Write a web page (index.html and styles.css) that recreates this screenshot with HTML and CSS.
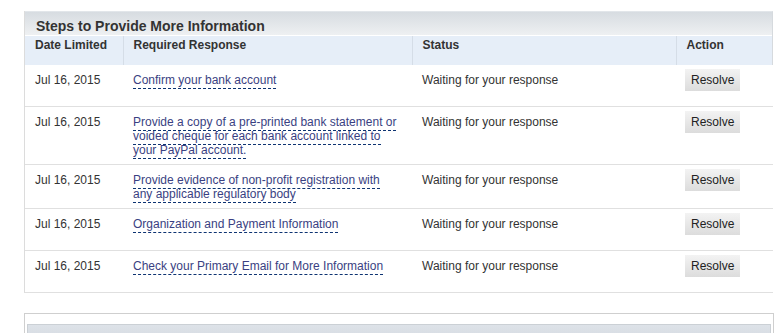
FILE: index.html
```html
<!DOCTYPE html>
<html lang="en">
<head>
    <meta charset="UTF-8">
    <meta name="viewport" content="width=device-width, initial-scale=1.0">
    <title>Steps to Provide More Information</title>
    <link rel="stylesheet" href="styles.css">
</head>
<body>
    <div class="panel">
        <div class="panel-title">Steps to Provide More Information</div>
        <table class="steps">
            <colgroup>
                <col class="col-date">
                <col class="col-response">
                <col class="col-status">
                <col>
            </colgroup>
            <thead>
                <tr>
                    <th>Date Limited</th>
                    <th>Required Response</th>
                    <th>Status</th>
                    <th class="last">Action</th>
                </tr>
            </thead>
            <tbody>
                <tr>
                    <td>Jul 16, 2015</td>
                    <td><a class="step-link" href="#">Confirm your bank account</a></td>
                    <td>Waiting for your response</td>
                    <td class="action"><button>Resolve</button></td>
                </tr>
                <tr>
                    <td>Jul 16, 2015</td>
                    <td><a class="step-link" href="#">Provide a copy of a pre-printed bank statement or voided cheque for each bank account linked to your PayPal account.</a></td>
                    <td>Waiting for your response</td>
                    <td class="action"><button>Resolve</button></td>
                </tr>
                <tr>
                    <td>Jul 16, 2015</td>
                    <td><a class="step-link" href="#">Provide evidence of non-profit registration with any applicable regulatory body</a></td>
                    <td>Waiting for your response</td>
                    <td class="action"><button>Resolve</button></td>
                </tr>
                <tr>
                    <td>Jul 16, 2015</td>
                    <td><a class="step-link" href="#">Organization and Payment Information</a></td>
                    <td>Waiting for your response</td>
                    <td class="action"><button>Resolve</button></td>
                </tr>
                <tr>
                    <td>Jul 16, 2015</td>
                    <td><a class="step-link" href="#">Check your Primary Email for More Information</a></td>
                    <td>Waiting for your response</td>
                    <td class="action"><button>Resolve</button></td>
                </tr>
            </tbody>
        </table>
    </div>

    <div class="panel-next">
        <div class="panel-next-bar"></div>
    </div>
</body>
</html>
```

FILE: styles.css
```css
body {
    margin: 0;
    font-family: Arial, "Liberation Sans", sans-serif;
    font-size: 12px;
    color: #333;
    background: #fff;
}
.panel {
    width: 749px;
    margin: 11px 0 0 24px;
    border-left: 1px solid #dcdcdc;
    border-bottom: 1px solid #e0e0e0;
    box-sizing: border-box;
}
.panel-title {
    height: 24px;
    padding: 6px 11px 0;
    box-sizing: border-box;
    border-top: 1px solid #e2e6ea;
    border-right: 1px solid #d6dade;
    background: linear-gradient(#d7dce1, #eef0f2);
    font-size: 14px;
    font-weight: bold;
    line-height: 16px;
    color: #333;
}
.steps {
    width: 748px;
    border-collapse: collapse;
    table-layout: fixed;
}
.col-date {
    width: 98px;
}
.col-response {
    width: 289px;
}
.col-status {
    width: 264px;
}
.steps th {
    height: 29px;
    padding: 2px 10px 0;
    box-sizing: border-box;
    border-top: 1px solid #fff;
    background: #e6eef8;
    text-align: left;
    vertical-align: top;
    font-weight: bold;
    line-height: 14px;
    color: #333;
}
.steps th + th {
    border-left: 1px solid #d5dde7;
}
.steps th.last {
    border-right: 1px solid #d6dade;
}
.steps td {
    padding: 8px 10px 7px;
    vertical-align: top;
    line-height: 14px;
    border-bottom: 1px solid #e0e0e0;
}
.steps tbody tr:last-child td {
    border-bottom: none;
}
.steps td.action {
    padding: 4px 10px 15px 9px;
}
.step-link {
    color: #3a3f82;
    text-decoration: none;
    border-bottom: 1px dashed #0d3372;
    padding-bottom: 1px;
}
button {
    height: 22px;
    padding: 0 6px;
    border: none;
    background: linear-gradient(#f3f3f3, #dcdcdc);
    font-family: Arial, "Liberation Sans", sans-serif;
    font-size: 12px;
    color: #222;
    cursor: pointer;
}
.panel-next {
    width: 750px;
    margin: 20px 0 0 24px;
    padding: 10px 2px 0;
    border: 1px solid #cfcfcf;
    border-bottom: none;
    box-sizing: border-box;
}
.panel-next-bar {
    height: 20px;
    border: 1px solid #cbd0d5;
    background: linear-gradient(#dde2e8, #d3d9e0);
}
```
